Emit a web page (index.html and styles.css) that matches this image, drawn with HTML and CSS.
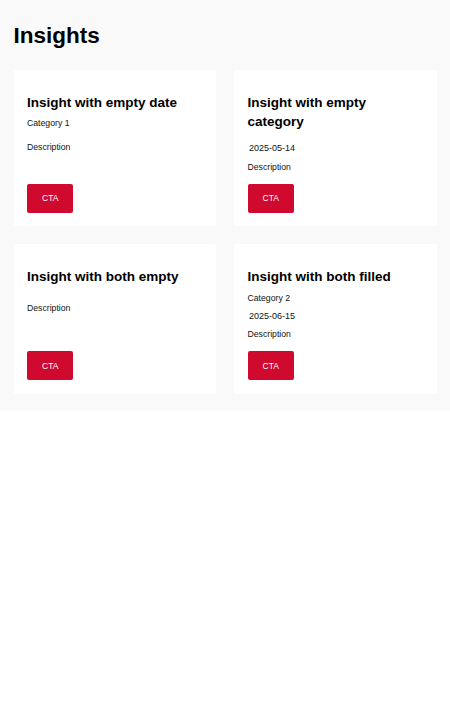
FILE: index.html
```html
<!DOCTYPE html>
<html lang="en">
<head>
<meta charset="utf-8">
<title>Insights</title>
<link rel="stylesheet" href="styles.css">
</head>
<body>
<main class="insights">
  <h1 class="insights-title">Insights</h1>
  <div class="insights-grid">
    <article class="card">
      <div class="card-body">
        <h3 class="card-title">Insight with empty date</h3>
        <p class="card-category">Category 1</p>
        <p class="card-date"></p>
        <p class="card-description">Description</p>
      </div>
      <a class="card-cta" href="#">CTA</a>
    </article>
    <article class="card">
      <div class="card-body">
        <h3 class="card-title">Insight with empty category</h3>
        <p class="card-category"></p>
        <p class="card-date">2025-05-14</p>
        <p class="card-description">Description</p>
      </div>
      <a class="card-cta" href="#">CTA</a>
    </article>
    <article class="card">
      <div class="card-body">
        <h3 class="card-title">Insight with both empty</h3>
        <p class="card-category"></p>
        <p class="card-date"></p>
        <p class="card-description">Description</p>
      </div>
      <a class="card-cta" href="#">CTA</a>
    </article>
    <article class="card">
      <div class="card-body">
        <h3 class="card-title">Insight with both filled</h3>
        <p class="card-category">Category 2</p>
        <p class="card-date">2025-06-15</p>
        <p class="card-description">Description</p>
      </div>
      <a class="card-cta" href="#">CTA</a>
    </article>
  </div>
</main>
</body>
</html>
```
FILE: styles.css
```css
html, body {
  margin: 0;
  padding: 0;
  background: #ffffff;
}

body {
  font-family: "Liberation Sans", Arial, sans-serif;
  color: #111111;
}

.insights {
  background: #f9f9f9;
  padding: 13.5px 13.5px 17.7px;
}

.insights-title {
  margin: 9px 0 21.5px;
  font-size: 22.5px;
  line-height: 26px;
  font-weight: 700;
  color: #000000;
}

.insights-grid {
  display: grid;
  grid-template-columns: 1fr 1fr;
  gap: 18px;
}

.card {
  background: #ffffff;
  border-radius: 2.5px;
  padding: 13.5px;
  display: flex;
  flex-direction: column;
}

.card-body {
  flex: 1;
  display: flex;
  flex-direction: column;
  gap: 5.4px;
}

.card-title {
  margin: 9.1px 0 0;
  font-size: 13.5px;
  line-height: 19.5px;
  font-weight: 700;
  color: #000000;
}

.card-category,
.card-date,
.card-description {
  margin: 0;
  font-size: 8.7px;
  line-height: 13px;
  color: #111111;
}

.card-date {
  font-size: 9px;
  padding-left: 1.5px;
}

.card-cta {
  margin-top: 9.8px;
  align-self: flex-start;
  background: #d0092f;
  color: #ffffff;
  font-size: 8.5px;
  line-height: 10px;
  padding: 9.5px 15px;
  border-radius: 2px;
  text-decoration: none;
}
```
